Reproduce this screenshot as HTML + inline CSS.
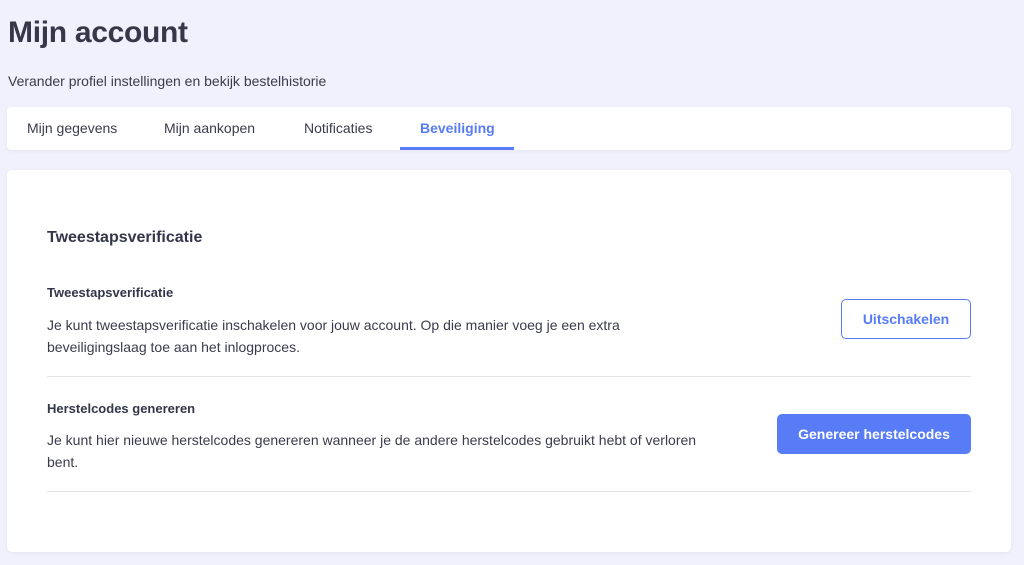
<!DOCTYPE html>
<html><head><meta charset="utf-8"><style>
*{margin:0;padding:0;box-sizing:border-box}
body{width:1024px;height:565px;background:#f0f1fd;font-family:"Liberation Sans",sans-serif;color:#34354a;position:relative;overflow:hidden}
h1{position:absolute;left:8px;top:16px;font-size:30px;font-weight:bold;color:#363748;letter-spacing:-0.3px}
.sub{position:absolute;left:8px;top:73px;font-size:14px;color:#3a3b4c}
.tabs{position:absolute;left:7px;top:107px;width:1004px;height:43px;background:#fff;border-radius:4px;box-shadow:0 1px 3px rgba(0,0,0,.06)}
.tab{position:absolute;top:13px;font-size:14px;color:#3a3b4c}
.act{color:#577cf5;font-weight:bold}
.bar{position:absolute;left:393px;top:40px;width:114px;height:3px;background:#577cf5}
.card{position:absolute;left:7px;top:170px;width:1004px;height:382px;background:#fff;border-radius:5px;box-shadow:0 1px 3px rgba(0,0,0,.06)}
.h2{position:absolute;left:40px;top:59px;font-size:16px;font-weight:bold;color:#34354a}
.t{position:absolute;left:40px;font-size:13px;font-weight:bold;color:#34354a}
.p{position:absolute;left:40px;font-size:14px;line-height:22px;color:#3a3b4c;width:680px}
.line{position:absolute;left:40px;width:924px;height:1px;background:#e3e4ea}
.b1{position:absolute;left:834px;top:129px;width:130px;height:40px;border:1px solid #577cf5;border-radius:5px;color:#577cf5;font-weight:bold;font-size:14px;text-align:center;line-height:38px}
.b2{position:absolute;left:770px;top:244px;width:194px;height:40px;background:#577cf5;border-radius:5px;color:#fff;font-weight:bold;font-size:14px;text-align:center;line-height:40px}
</style></head><body>
<h1>Mijn account</h1>
<div class="sub">Verander profiel instellingen en bekijk bestelhistorie</div>
<div class="tabs">
<div class="tab" style="left:20px">Mijn gegevens</div>
<div class="tab" style="left:157px">Mijn aankopen</div>
<div class="tab" style="left:297px">Notificaties</div>
<div class="tab act" style="left:413px">Beveiliging</div>
<div class="bar"></div>
</div>
<div class="card">
<div class="h2">Tweestapsverificatie</div>
<div class="t" style="top:115px">Tweestapsverificatie</div>
<div class="p" style="top:144px">Je kunt tweestapsverificatie inschakelen voor jouw account. Op die manier voeg je een extra<br>beveiligingslaag toe aan het inlogproces.</div>
<div class="b1">Uitschakelen</div>
<div class="line" style="top:206px"></div>
<div class="t" style="top:231px">Herstelcodes genereren</div>
<div class="p" style="top:259px">Je kunt hier nieuwe herstelcodes genereren wanneer je de andere herstelcodes gebruikt hebt of verloren<br>bent.</div>
<div class="b2">Genereer herstelcodes</div>
<div class="line" style="top:321px"></div>
</div>
</body></html>
